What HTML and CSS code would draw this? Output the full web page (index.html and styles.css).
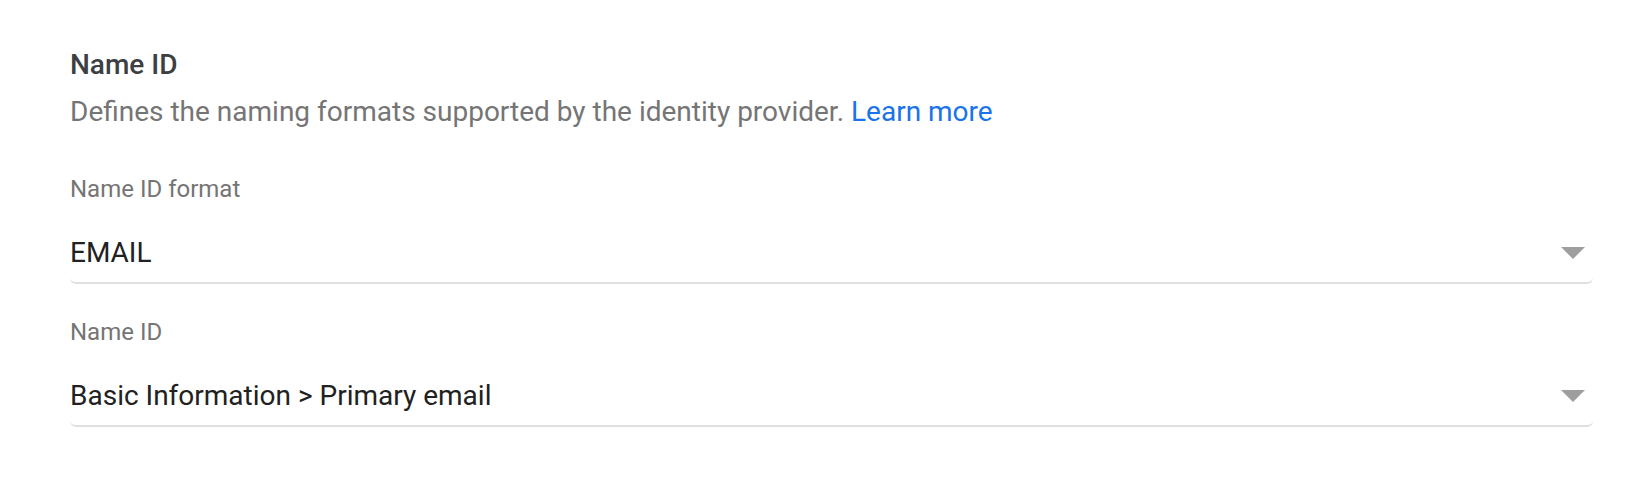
FILE: index.html
```html
<!DOCTYPE html>
<html>
<head>
<meta charset="utf-8">
<link rel="stylesheet" href="styles.css">
</head>
<body>
<section class="panel">
  <h2 class="title">Name ID</h2>
  <p class="desc">Defines the naming formats supported by the identity provider. <a class="link" href="#">Learn more</a></p>
  <div class="field">
    <div class="label">Name ID format</div>
    <div class="select">
      <span class="value">EMAIL</span>
      <span class="arrow"></span>
    </div>
  </div>
  <div class="field">
    <div class="label">Name ID</div>
    <div class="select">
      <span class="value">Basic Information &gt; Primary email</span>
      <span class="arrow"></span>
    </div>
  </div>
</section>
</body>
</html>
```
FILE: styles.css
```css
html, body {
  margin: 0;
  padding: 0;
  background: #ffffff;
}
body {
  font-family: Roboto, "Liberation Sans", Arial, sans-serif;
}
.panel {
  padding: 46px 45px 0 70px;
}
.title {
  margin: 0;
  font-size: 28px;
  font-weight: 500;
  line-height: 38px;
  color: #3c4043;
}
.desc {
  margin: 10px 0 0;
  font-size: 28px;
  line-height: 36px;
  color: #757575;
}
.link {
  color: #1a73e8;
  text-decoration: none;
}
.field {
  display: flex;
  flex-direction: column;
}
.label {
  margin-top: 44px;
  font-size: 24px;
  line-height: 30px;
  color: #757575;
}
.field + .field .label {
  margin-top: 33px;
}
.select {
  display: flex;
  align-items: center;
  justify-content: space-between;
  margin-top: 32px;
  padding-bottom: 12px;
  border-bottom: 2px solid #e0e0e0;
  border-radius: 0 0 6px 6px;
}
.value {
  font-size: 28px;
  line-height: 34px;
  color: #212121;
}
.arrow {
  width: 0;
  height: 0;
  margin-right: 8px;
  border-left: 12px solid transparent;
  border-right: 12px solid transparent;
  border-top: 12px solid #9e9e9e;
}
```
